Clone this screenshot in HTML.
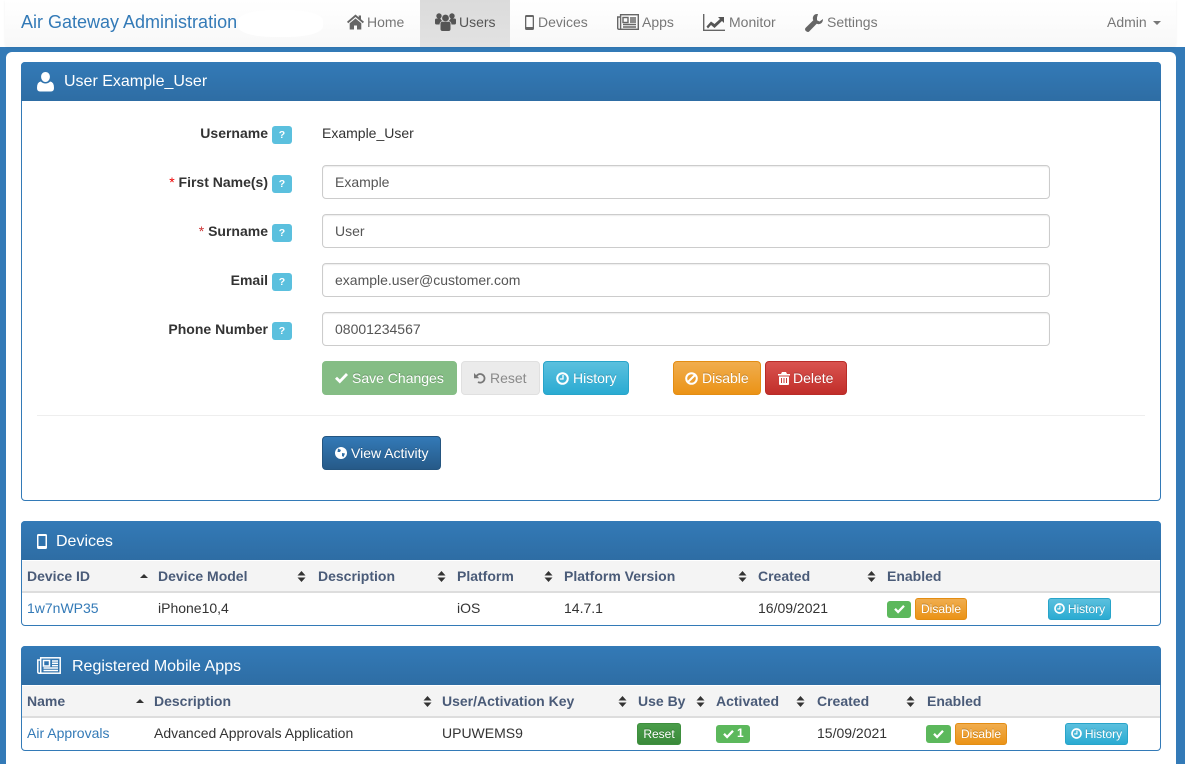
<!DOCTYPE html>
<html><head><meta charset="utf-8"><title>Air Gateway Administration</title>
<style>
*{box-sizing:border-box}
html,body{margin:0;padding:0}
body{width:1185px;height:764px;overflow:hidden;position:relative;background:#337ab7;font-family:"Liberation Sans",Arial,sans-serif;font-size:14px;color:#333}
.a{position:absolute;white-space:nowrap}
svg{position:absolute;display:block}
.nav{left:0;top:0;width:1185px;height:47px;background:#fff}
.navin{left:5px;top:0;width:1171px;height:47px;background:linear-gradient(#fff,#f8f8f8);border-radius:0 0 4px 4px;box-shadow:0 1px 2px rgba(0,0,0,.06)}
.nt{color:#777;top:14px;line-height:17px}
.main{left:6px;top:52px;width:1170px;height:712px;background:#fff;border-radius:6px 6px 0 0}
.panel{left:21px;width:1140px;background:#fff;border:1px solid #337ab7;border-radius:4px}
.ph{left:21px;width:1140px;height:39px;background:linear-gradient(#337ab7,#2e6da4);border-radius:4px 4px 0 0;color:#fff;font-size:16px;line-height:39px}
.lab{font-weight:bold;right:917px;line-height:17px;color:#333}
.q{left:272px;width:20px;height:18px;background:#5bc0de;border-radius:3px;color:#fff;font-weight:bold;font-size:10.5px;line-height:18px;text-align:center}
.inp{left:322px;width:728px;height:34px;border:1px solid #ccc;border-radius:4px;background:#fff;color:#555;padding:0 12px;line-height:32px;box-shadow:inset 0 1px 1px rgba(0,0,0,.075)}
.btn{height:34px;border-radius:4px;color:#fff;line-height:32px;border:1px solid;text-shadow:0 -1px 0 rgba(0,0,0,.2)}
.sm{height:22px;border-radius:3px;color:#fff;font-size:12px;line-height:20px;border:1px solid;text-align:center;text-shadow:0 -1px 0 rgba(0,0,0,.2)}
.org{background:linear-gradient(#f0ad4e,#eb9316);border-color:#e38d13}
.inf{background:linear-gradient(#5bc0de,#2aabd2);border-color:#28a4c9}
.thb{left:22px;width:1138px;height:32px;background:#f4f4f4;border-bottom:2px solid #ddd}
.th{font-weight:bold;color:#4a5b78;line-height:17px}
.td{line-height:17px;color:#333}
.lnk{color:#337ab7}
</style></head><body>
<div class="a nav"></div><div class="a navin"></div>
<div class="a" style="left:21px;top:11px;font-size:18px;line-height:22px;color:#337ab7">Air Gateway Administration</div>
<div class="a" style="left:238px;top:10px;width:85px;height:27px;background:#fff;border-radius:40%"></div>
<div class="a" style="left:420px;top:0;width:90px;height:47px;background:linear-gradient(#dbdbdb,#e2e2e2)"></div>

<svg style="left:347px;top:14px" width="17" height="16" viewBox="0 0 17 16"><path fill="#666" d="M8.500 .5 0 7.700l1.200 1.500L8.500 3l7.300 6.200L17 7.700l-3-2.500V1.500h-2.300v1.800zM2.700 9.300V15.500h4.300v-4h3v4h4.300V9.300L8.500 4.500z"/></svg>
<div class="a nt" style="left:367px">Home</div>
<svg style="left:435px;top:12px" width="21" height="20" viewBox="0 0 21 20"><g fill="#555"><circle cx="10.500" cy="6" r="3.400"/><circle cx="4" cy="4" r="2.700"/><circle cx="17" cy="4" r="2.700"/><path d="M5.500 11.500q0-1.800 2-1.800h6q2 0 2 1.800V17q0 2-2 2h-6q-2 0-2-2z"/><path d="M0 8q0-1.500 1.500-1.500h4q.6 2 2 2.500-3 .5-3 3.500H1.500Q0 12.500 0 11zM21 8q0-1.500-1.500-1.500h-4q-.6 2-2 2.500 3 .5 3 3.500h3Q21 12.500 21 11z"/></g></svg>
<div class="a nt" style="left:459px;color:#555">Users</div>
<svg style="left:525px;top:15px" width="9" height="15" viewBox="0 0 9 15"><path fill="#666" fill-rule="evenodd" d="M1.500 0h6Q9 0 9 1.500v12Q9 15 7.500 15h-6Q0 15 0 13.500v-12Q0 0 1.500 0zM1.300 2v10h6.400V2z"/></svg>
<div class="a nt" style="left:538px">Devices</div>
<svg style="left:617px;top:14px" width="22" height="16" viewBox="0 0 22 16"><g fill="none" stroke="#666" stroke-width="1.400"><rect x="3.600" y=".7" width="17.700" height="14.600"/><path d="M3.600 3H.7v11q0 1.300 1.500 1.300h1.400"/><rect x="6" y="3.500" width="5" height="5"/><path d="M13 4h6M13 6h6M13 8h6M6 10.500h13M6 13h13"/></g></svg>
<div class="a nt" style="left:642px">Apps</div>
<svg style="left:703px;top:14px" width="22" height="17" viewBox="0 0 22 17"><path fill="none" stroke="#666" stroke-width="1.400" d="M.7 0v16.300H22"/><path fill="#555" d="M3.500 12.500 8 7.500l3.500 2.500L17 5l-2-2h6v6l-2-2-7.500 7-3.500-3-3 3.500z"/></svg>
<div class="a nt" style="left:729px">Monitor</div>
<svg style="left:805px;top:14px" width="18" height="18" viewBox="0 0 18 18"><path fill="#666" d="M13 0q-4-.3-5 3-.5 2 .3 3.300L.7 13.800Q0 14.600 0 15.300q0 1 1.200 2 .8.700 1.700.7t1.500-.8l7.300-7.400q2 .8 3.700 0Q18 8.500 18 5l-3.500 2.500L12 6.200V3.500z"/></svg>
<div class="a nt" style="left:827px">Settings</div>
<div class="a nt" style="left:1107px">Admin</div>
<div class="a" style="left:1153px;top:21px;width:0;height:0;border:4px solid transparent;border-top-color:#777;border-bottom:0"></div>

<div class="a main"></div>

<div class="a panel" style="top:62px;height:439px"></div>
<div class="a ph" style="top:62px"><span style="position:absolute;left:43px">User Example_User</span></div>
<svg style="left:37px;top:72px" width="17" height="20" viewBox="0 0 17 20"><path fill="#fff" d="M8.500 0c2.600 0 4.400 2 4.400 4.700S11 10 8.500 10 4.100 7.400 4.100 4.700 5.900 0 8.500 0zM3.800 9.500q2 2 4.700 2t4.700-2q3.800.5 3.800 6.500 0 3.500-3 3.500H3q-3 0-3-3.500 0-6 3.800-6.500z"/></svg>

<div class="a lab" style="top:125px">Username</div><div class="a q" style="top:126px">?</div>
<div class="a td" style="left:322px;top:125px">Example_User</div>
<div class="a lab" style="top:174px"><span style="color:#e00;font-weight:normal">*</span> First Name(s)</div><div class="a q" style="top:175px">?</div>
<div class="a inp" style="top:165px">Example</div>
<div class="a lab" style="top:223px"><span style="color:#c33;font-weight:normal">*</span> Surname</div><div class="a q" style="top:224px">?</div>
<div class="a inp" style="top:214px">User</div>
<div class="a lab" style="top:272px">Email</div><div class="a q" style="top:273px">?</div>
<div class="a inp" style="top:263px">example.user@customer.com</div>
<div class="a lab" style="top:321px">Phone Number</div><div class="a q" style="top:322px">?</div>
<div class="a inp" style="top:312px">08001234567</div>

<div class="a btn" style="left:322px;top:361px;width:135px;background:linear-gradient(#85bd85,#85bd85);border-color:#85bd85;padding-left:29px">Save Changes</div>
<svg style="left:335px;top:373px" width="13" height="11" viewBox="0 0 13 11"><path fill="#fff" d="M0 5.700 2 3.700l2.800 2.800L11 0l2 2-8.200 8.500z"/></svg>
<div class="a btn" style="left:461px;top:361px;width:79px;background:#ebebeb;border-color:#e0e0e0;color:#8a8a8a;text-shadow:none;padding-left:28px">Reset</div>
<svg style="left:474px;top:372px" width="12" height="12" viewBox="0 0 12 12"><path fill="none" stroke="#777" stroke-width="1.800" d="M2 5.500A4.300 4.300 0 1 1 4 10"/><path fill="#777" d="M0 1v5.200h5.200z"/></svg>
<div class="a btn inf" style="left:543px;top:361px;width:86px;padding-left:29px">History</div>
<svg style="left:556px;top:372px" width="13" height="13" viewBox="0 0 13 13"><circle cx="6.500" cy="6.500" r="5.300" fill="none" stroke="#fff" stroke-width="2"/><path fill="none" stroke="#fff" stroke-width="1.300" d="M7 3v4H3.800"/></svg>
<div class="a btn org" style="left:673px;top:361px;width:88px;padding-left:28px">Disable</div>
<svg style="left:685px;top:372px" width="13" height="13" viewBox="0 0 13 13"><circle cx="6.500" cy="6.500" r="5.300" fill="none" stroke="#fff" stroke-width="2"/><path stroke="#fff" stroke-width="2" d="M3 10 10 3"/></svg>
<div class="a btn" style="left:765px;top:361px;width:82px;background:linear-gradient(#d9534f,#c12e2a);border-color:#b92c28;padding-left:27px">Delete</div>
<svg style="left:778px;top:372px" width="12" height="13" viewBox="0 0 12 13"><path fill="#fff" fill-rule="evenodd" d="M4 0h4l1 2h3v1.500H0V2h3zM1 4.500h10V12q0 1-1 1H2q-1 0-1-1zM3 6v5h1V6zm2.500 0v5h1V6zM8 6v5h1V6z"/></svg>
<div class="a" style="left:37px;top:415px;width:1108px;height:1px;background:#eee"></div>
<div class="a btn" style="left:322px;top:436px;width:119px;background:linear-gradient(#337ab7,#265a88);border-color:#245580;padding-left:28px">View Activity</div>
<svg style="left:335px;top:447px" width="12" height="12" viewBox="0 0 12 12"><circle cx="6" cy="6" r="6" fill="#fff"/><path fill="#2f6ea5" d="M3 1.500 6 3 5 5 2.500 5zM7 6l3 .5L8.500 10 7 9z"/></svg>

<!-- Devices -->
<div class="a panel" style="top:521px;height:105px"></div>
<div class="a ph" style="top:521px;line-height:41px"><span style="position:absolute;left:35px">Devices</span></div>
<svg style="left:37px;top:534px" width="10" height="15" viewBox="0 0 10 15"><path fill="#fff" fill-rule="evenodd" d="M1.500 0h7Q10 0 10 1.500v12Q10 15 8.500 15h-7Q0 15 0 13.500v-12Q0 0 1.500 0zM1.500 2v10h7V2z"/></svg>
<div class="a thb" style="top:561px"></div>
<div class="a th" style="left:27px;top:568px">Device ID</div>
<div class="a" style="left:140px;top:574px;border:4px solid transparent;border-bottom-color:#333;border-top:0"></div>
<div class="a th" style="left:158px;top:568px">Device Model</div>
<div class="a th" style="left:318px;top:568px">Description</div>
<div class="a th" style="left:457px;top:568px">Platform</div>
<div class="a th" style="left:564px;top:568px">Platform Version</div>
<div class="a th" style="left:758px;top:568px">Created</div>
<div class="a th" style="left:887px;top:568px">Enabled</div>
<svg style="left:297px;top:571px" width="9" height="11" viewBox="0 0 9 11"><path fill="#333" d="M.5 4.500 4.500 0l4 4.500zM.5 6.500h8L4.500 11z"/></svg>
<svg style="left:437px;top:571px" width="9" height="11" viewBox="0 0 9 11"><path fill="#333" d="M.5 4.500 4.500 0l4 4.500zM.5 6.500h8L4.500 11z"/></svg>
<svg style="left:544px;top:571px" width="9" height="11" viewBox="0 0 9 11"><path fill="#333" d="M.5 4.500 4.500 0l4 4.500zM.5 6.500h8L4.500 11z"/></svg>
<svg style="left:738px;top:571px" width="9" height="11" viewBox="0 0 9 11"><path fill="#333" d="M.5 4.500 4.500 0l4 4.500zM.5 6.500h8L4.500 11z"/></svg>
<svg style="left:867px;top:571px" width="9" height="11" viewBox="0 0 9 11"><path fill="#333" d="M.5 4.500 4.500 0l4 4.500zM.5 6.500h8L4.500 11z"/></svg>
<div class="a td lnk" style="left:27px;top:600px">1w7nWP35</div>
<div class="a td" style="left:158px;top:600px">iPhone10,4</div>
<div class="a td" style="left:457px;top:600px">iOS</div>
<div class="a td" style="left:564px;top:600px">14.7.1</div>
<div class="a td" style="left:758px;top:600px">16/09/2021</div>
<div class="a" style="left:887px;top:601px;width:24px;height:17px;background:#5cb85c;border-radius:3px"></div>
<svg style="left:894px;top:605px" width="11" height="9" viewBox="0 0 13 11"><path fill="#fff" d="M0 5.700 2 3.700l2.800 2.800L11 0l2 2-8.200 8.500z"/></svg>
<div class="a sm org" style="left:915px;top:598px;width:52px">Disable</div>
<div class="a sm inf" style="left:1048px;top:598px;width:63px;padding-left:14px">History</div>
<svg style="left:1054px;top:603px" width="11" height="11" viewBox="0 0 13 13"><circle cx="6.500" cy="6.500" r="5.300" fill="none" stroke="#fff" stroke-width="2"/><path fill="none" stroke="#fff" stroke-width="1.300" d="M7 3v4H3.800"/></svg>

<!-- Apps -->
<div class="a panel" style="top:646px;height:105px"></div>
<div class="a ph" style="top:646px;line-height:41px"><span style="position:absolute;left:51px">Registered Mobile Apps</span></div>
<svg style="left:37px;top:657px" width="24" height="17" viewBox="0 0 24 17"><g fill="none" stroke="#fff" stroke-width="1.500"><rect x="3.700" y=".8" width="19.500" height="15.400"/><path d="M3.700 3H.8v12q0 1.200 1.500 1.200h1.400"/><rect x="6.500" y="3.500" width="6" height="5.500"/><path d="M15 4h6M15 6.300h6M15 8.600h6M6.500 11h14.500M6.500 13.500h14.500"/></g></svg>
<div class="a thb" style="top:686px"></div>
<div class="a th" style="left:27px;top:693px">Name</div>
<div class="a" style="left:136px;top:699px;border:4px solid transparent;border-bottom-color:#333;border-top:0"></div>
<div class="a th" style="left:154px;top:693px">Description</div>
<div class="a th" style="left:442px;top:693px">User/Activation Key</div>
<div class="a th" style="left:638px;top:693px">Use By</div>
<div class="a th" style="left:716px;top:693px">Activated</div>
<div class="a th" style="left:817px;top:693px">Created</div>
<div class="a th" style="left:927px;top:693px">Enabled</div>
<svg style="left:423px;top:696px" width="9" height="11" viewBox="0 0 9 11"><path fill="#333" d="M.5 4.500 4.500 0l4 4.500zM.5 6.500h8L4.500 11z"/></svg>
<svg style="left:618px;top:696px" width="9" height="11" viewBox="0 0 9 11"><path fill="#333" d="M.5 4.500 4.500 0l4 4.500zM.5 6.500h8L4.500 11z"/></svg>
<svg style="left:696px;top:696px" width="9" height="11" viewBox="0 0 9 11"><path fill="#333" d="M.5 4.500 4.500 0l4 4.500zM.5 6.500h8L4.500 11z"/></svg>
<svg style="left:796px;top:696px" width="9" height="11" viewBox="0 0 9 11"><path fill="#333" d="M.5 4.500 4.500 0l4 4.500zM.5 6.500h8L4.500 11z"/></svg>
<svg style="left:906px;top:696px" width="9" height="11" viewBox="0 0 9 11"><path fill="#333" d="M.5 4.500 4.500 0l4 4.500zM.5 6.500h8L4.500 11z"/></svg>
<div class="a td lnk" style="left:27px;top:725px">Air Approvals</div>
<div class="a td" style="left:154px;top:725px">Advanced Approvals Application</div>
<div class="a td" style="left:442px;top:725px">UPUWEMS9</div>
<div class="a sm" style="left:637px;top:723px;width:44px;background:linear-gradient(#4a9d4a,#3a8a3a);border-color:#3e8f3e">Reset</div>
<div class="a" style="left:716px;top:725px;width:34px;height:18px;background:#5cb85c;border-radius:3px;color:#fff;font-weight:bold;font-size:12px;line-height:17px;padding-left:21px">1</div>
<svg style="left:723px;top:730px" width="11" height="9" viewBox="0 0 13 11"><path fill="#fff" d="M0 5.700 2 3.700l2.800 2.800L11 0l2 2-8.200 8.500z"/></svg>
<div class="a td" style="left:817px;top:725px">15/09/2021</div>
<div class="a" style="left:926px;top:725px;width:25px;height:18px;background:#5cb85c;border-radius:3px"></div>
<svg style="left:933px;top:730px" width="11" height="9" viewBox="0 0 13 11"><path fill="#fff" d="M0 5.700 2 3.700l2.800 2.800L11 0l2 2-8.200 8.500z"/></svg>
<div class="a sm org" style="left:955px;top:723px;width:52px">Disable</div>
<div class="a sm inf" style="left:1065px;top:723px;width:63px;padding-left:14px">History</div>
<svg style="left:1071px;top:728px" width="11" height="11" viewBox="0 0 13 13"><circle cx="6.500" cy="6.500" r="5.300" fill="none" stroke="#fff" stroke-width="2"/><path fill="none" stroke="#fff" stroke-width="1.300" d="M7 3v4H3.800"/></svg>
</body></html>
